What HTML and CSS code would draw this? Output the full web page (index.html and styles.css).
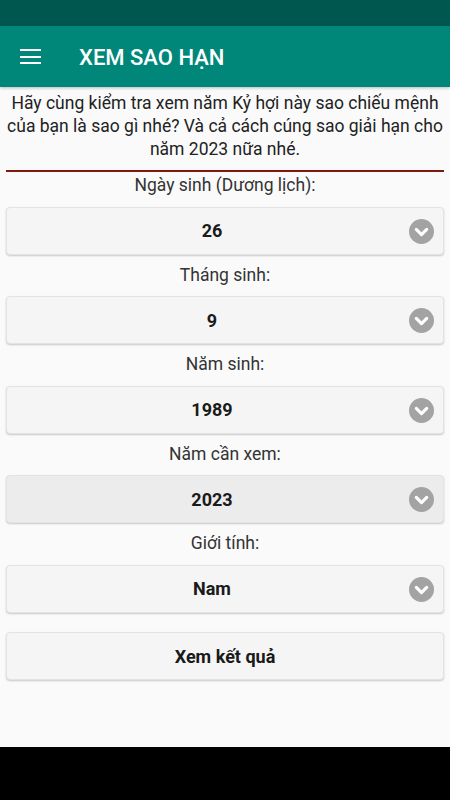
FILE: index.html
```html
<!DOCTYPE html>
<html lang="vi">
<head>
  <meta charset="UTF-8" />
  <meta name="viewport" content="width=device-width, initial-scale=1.0"/>
  <title>Xem Sao Hạn</title>
  <link rel="stylesheet" href="styles.css">
</head>
<body>

  <div class="status-bar"></div>

  <div class="toolbar">
    <div class="menu-icon">
      <span></span>
      <span></span>
      <span></span>
    </div>
    <h1>XEM SAO HẠN</h1>
  </div>

  <div class="content">
    <p class="intro">Hãy cùng kiểm tra xem năm Kỷ hợi này sao chiếu mệnh của bạn là sao gì nhé? Và cả cách cúng sao giải hạn cho năm 2023 nữa nhé.</p>
    <div class="divider"></div>

    <div class="label">Ngày sinh (Dương lịch):</div>
    <div class="select">
      <span>26</span>
      <svg class="arrow" viewBox="0 0 24 24"><circle cx="12" cy="12" r="12" fill="#a3a3a3"/><path d="M7 10l5 5 5-5" fill="none" stroke="#fff" stroke-width="3" stroke-linecap="round" stroke-linejoin="round"/></svg>
    </div>

    <div class="label">Tháng sinh:</div>
    <div class="select">
      <span>9</span>
      <svg class="arrow" viewBox="0 0 24 24"><circle cx="12" cy="12" r="12" fill="#a3a3a3"/><path d="M7 10l5 5 5-5" fill="none" stroke="#fff" stroke-width="3" stroke-linecap="round" stroke-linejoin="round"/></svg>
    </div>

    <div class="label">Năm sinh:</div>
    <div class="select">
      <span>1989</span>
      <svg class="arrow" viewBox="0 0 24 24"><circle cx="12" cy="12" r="12" fill="#a3a3a3"/><path d="M7 10l5 5 5-5" fill="none" stroke="#fff" stroke-width="3" stroke-linecap="round" stroke-linejoin="round"/></svg>
    </div>

    <div class="label">Năm cần xem:</div>
    <div class="select active">
      <span>2023</span>
      <svg class="arrow" viewBox="0 0 24 24"><circle cx="12" cy="12" r="12" fill="#a3a3a3"/><path d="M7 10l5 5 5-5" fill="none" stroke="#fff" stroke-width="3" stroke-linecap="round" stroke-linejoin="round"/></svg>
    </div>

    <div class="label">Giới tính:</div>
    <div class="select">
      <span>Nam</span>
      <svg class="arrow" viewBox="0 0 24 24"><circle cx="12" cy="12" r="12" fill="#a3a3a3"/><path d="M7 10l5 5 5-5" fill="none" stroke="#fff" stroke-width="3" stroke-linecap="round" stroke-linejoin="round"/></svg>
    </div>

    <button class="submit">Xem kết quả</button>
  </div>

  <div class="nav-bar"></div>

</body>
</html>
```

FILE: styles.css
```css
html, body {
  height: 100%;
}

body {
  font-family: Roboto, 'Liberation Sans', sans-serif;
  background-color: #fafafa;
  color: #212121;
  margin: 0;
  padding: 0;
  display: flex;
  flex-direction: column;
}

.status-bar {
  height: 26px;
  background-color: #00574f;
}

.toolbar {
  height: 61px;
  background-color: #01877a;
  display: flex;
  align-items: center;
  box-shadow: 0 1px 3px rgba(0, 0, 0, 0.25);
}

.menu-icon {
  width: 21px;
  margin-left: 20px;
  display: flex;
  flex-direction: column;
  gap: 4.5px;
}

.menu-icon span {
  height: 2px;
  background: #fff;
}

.toolbar h1 {
  margin: 2px 0 0 38px;
  font-size: 22px;
  font-weight: 500;
  color: #fff;
}

.content {
  flex: 1;
  padding: 0 6px;
  display: flex;
  flex-direction: column;
}

.intro {
  margin: 5px 0 0;
  font-size: 17.5px;
  line-height: 23px;
  text-align: center;
  color: #222;
}

.divider {
  height: 1.5px;
  background-color: #7d1a10;
  margin-top: 9px;
}

.label {
  font-size: 17.5px;
  line-height: 20px;
  text-align: center;
  color: #333;
  margin: 10px 0 11.5px;
}

.divider + .label {
  margin-top: 3.5px;
}

.select {
  height: 48px;
  box-sizing: border-box;
  padding-right: 26px;
  background-color: #f5f5f5;
  border: 1px solid #e3e3e3;
  border-radius: 4px;
  box-shadow: 0 1px 2px rgba(0, 0, 0, 0.2);
  display: flex;
  align-items: center;
  justify-content: center;
  position: relative;
  font-size: 18px;
  font-weight: bold;
  color: #1a1a1a;
}

.select.active {
  background-color: #ececec;
}

.arrow {
  position: absolute;
  right: 9px;
  top: 11px;
  width: 25px;
  height: 25px;
}

.submit {
  margin-top: 19.5px;
  height: 48px;
  width: 100%;
  background-color: #f5f5f5;
  border: 1px solid #e3e3e3;
  border-radius: 4px;
  box-shadow: 0 1px 2px rgba(0, 0, 0, 0.2);
  font-family: inherit;
  font-size: 18px;
  font-weight: bold;
  color: #1a1a1a;
}

.nav-bar {
  height: 53px;
  background-color: #000;
}
```
